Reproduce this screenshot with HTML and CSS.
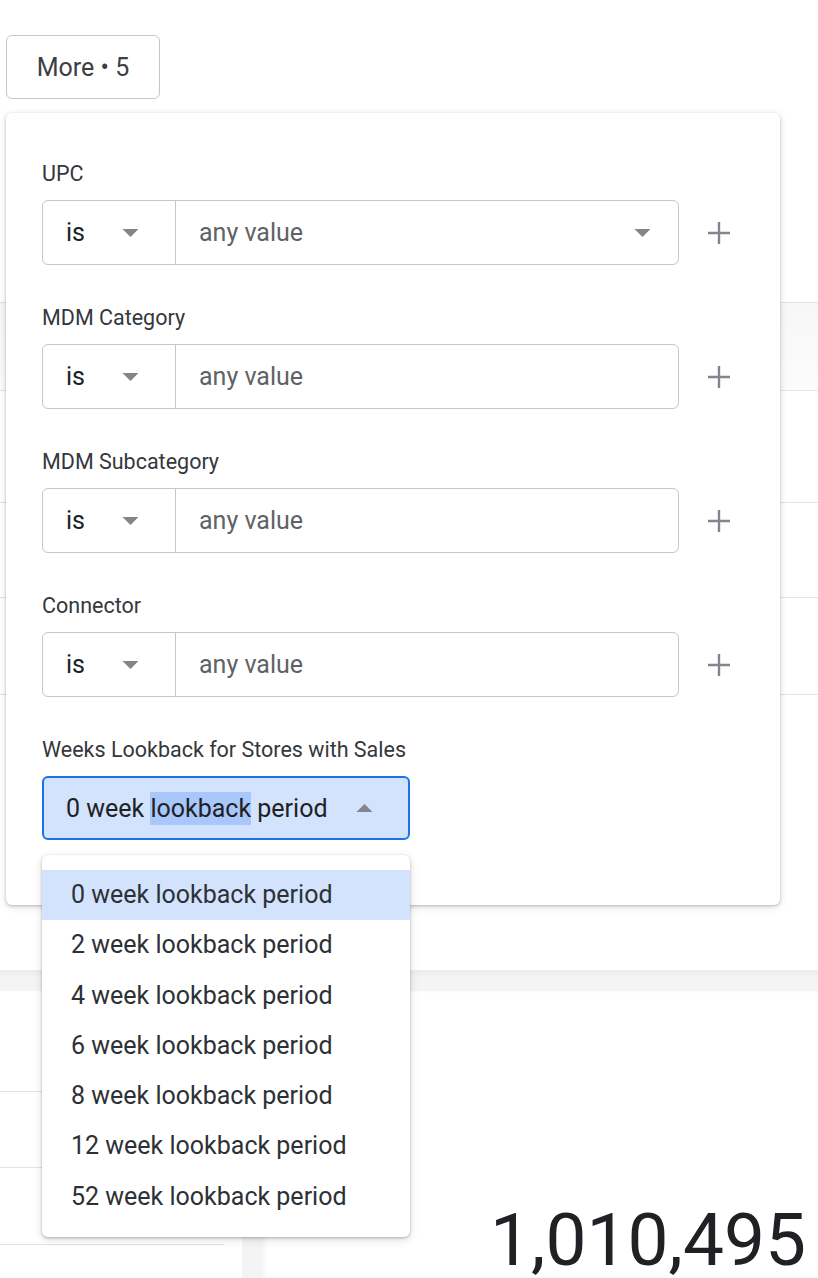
FILE: index.html
```html
<!DOCTYPE html>
<html>
<head>
<meta charset="utf-8">
<title>Filters</title>
<link rel="stylesheet" href="styles.css">
</head>
<body>
<div class="page">
  <div class="bg-top">
    <div class="more-wrap">
      <button class="more-btn">More • 5</button>
      <div class="popover">
        <div class="field">
          <div class="label">UPC</div>
          <div class="row">
            <div class="group">
              <div class="op">is<svg class="caret" viewBox="0 0 16 8"><path d="M0 0h16L8 8z"/></svg></div>
              <div class="val">any value<svg class="caret caret-end" viewBox="0 0 16 8"><path d="M0 0h16L8 8z"/></svg></div>
            </div>
            <svg class="plus" viewBox="0 0 22 22"><path d="M11 0v22M0 11h22"/></svg>
          </div>
        </div>
        <div class="field">
          <div class="label">MDM Category</div>
          <div class="row">
            <div class="group">
              <div class="op">is<svg class="caret" viewBox="0 0 16 8"><path d="M0 0h16L8 8z"/></svg></div>
              <div class="val">any value</div>
            </div>
            <svg class="plus" viewBox="0 0 22 22"><path d="M11 0v22M0 11h22"/></svg>
          </div>
        </div>
        <div class="field">
          <div class="label">MDM Subcategory</div>
          <div class="row">
            <div class="group">
              <div class="op">is<svg class="caret" viewBox="0 0 16 8"><path d="M0 0h16L8 8z"/></svg></div>
              <div class="val">any value</div>
            </div>
            <svg class="plus" viewBox="0 0 22 22"><path d="M11 0v22M0 11h22"/></svg>
          </div>
        </div>
        <div class="field">
          <div class="label">Connector</div>
          <div class="row">
            <div class="group">
              <div class="op">is<svg class="caret" viewBox="0 0 16 8"><path d="M0 0h16L8 8z"/></svg></div>
              <div class="val">any value</div>
            </div>
            <svg class="plus" viewBox="0 0 22 22"><path d="M11 0v22M0 11h22"/></svg>
          </div>
        </div>
        <div class="field field-last">
          <div class="label">Weeks Lookback for Stores with Sales</div>
          <div class="select-wrap">
            <div class="select"><span>0 week <span class="sel">lookback</span> period</span><svg class="caret caret-up" viewBox="0 0 16 8"><path d="M0 8h16L8 0z"/></svg></div>
            <ul class="menu">
              <li class="active">0 week lookback period</li>
              <li>2 week lookback period</li>
              <li>4 week lookback period</li>
              <li>6 week lookback period</li>
              <li>8 week lookback period</li>
              <li>12 week lookback period</li>
              <li>52 week lookback period</li>
            </ul>
          </div>
        </div>
      </div>
    </div>
  </div>
  <div class="bg-band"></div>
  <div class="bg-row r1"></div>
  <div class="bg-row r2"></div>
  <div class="bg-row r3"></div>
  <div class="bg-spacer"></div>
  <div class="bg-gutter-h"></div>
  <div class="tiles">
    <div class="tile-left">
      <div class="tl-line l1"></div>
      <div class="tl-line l2"></div>
      <div class="tl-line l3"></div>
    </div>
    <div class="tile-gutter"></div>
    <div class="tile-right">
      <div class="big-number">1,010,495</div>
    </div>
  </div>
</div>
</body>
</html>
```
FILE: styles.css
```css
html, body {
  margin: 0;
  padding: 0;
  background: #ffffff;
  height: 1278px;
  overflow: hidden;
}
body {
  font-family: Roboto, "Noto Sans", Arial, sans-serif;
  color: #3c4043;
}
.page {
  width: 818px;
  height: 1278px;
  display: flex;
  flex-direction: column;
}
.bg-top {
  height: 303px;
  flex: none;
  border-bottom: 1px solid #e2e3e5;
  box-sizing: border-box;
  padding-top: 35px;
  padding-left: 6px;
}
.more-wrap {
  position: relative;
  width: 154px;
}
.more-btn {
  display: block;
  width: 154px;
  height: 64px;
  border: 1px solid #c3c7cc;
  border-radius: 6px;
  background: #fff;
  font-family: Roboto, "Noto Sans", Arial, sans-serif;
  font-size: 25px;
  color: #3c4043;
  padding: 0;
  box-sizing: border-box;
}
.popover {
  position: absolute;
  left: 0;
  top: 78px;
  width: 774px;
  height: 792px;
  box-sizing: border-box;
  background: #fff;
  border-radius: 6px;
  box-shadow: 0 1px 3px rgba(0,0,0,0.22), 0 2px 8px rgba(0,0,0,0.12);
  padding: 49px 36px 0;
  z-index: 5;
}
.field {
  margin-bottom: 41px;
}
.label {
  font-size: 21.5px;
  line-height: 24px;
  height: 24px;
  color: #34383c;
  margin-bottom: 14px;
  white-space: nowrap;
}
.row {
  display: flex;
  align-items: center;
}
.group {
  width: 637px;
  height: 65px;
  box-sizing: border-box;
  border: 1px solid #c4c7cc;
  border-radius: 6px;
  display: flex;
  font-size: 25px;
}
.op {
  width: 133px;
  flex: none;
  border-right: 1px solid #c4c7cc;
  display: flex;
  align-items: center;
  padding-left: 23px;
  padding-right: 36px;
  box-sizing: border-box;
  color: #202124;
}
.op .caret {
  margin-left: auto;
}
.caret {
  width: 17px;
  height: 8px;
  fill: #80868b;
  flex: none;
}
.val {
  flex: 1;
  display: flex;
  align-items: center;
  padding-left: 23px;
  padding-right: 27px;
  color: #5f6368;
}
.caret-end {
  margin-left: auto;
}
.plus {
  width: 22px;
  height: 22px;
  margin-left: 29px;
  stroke: #80868b;
  stroke-width: 2.4;
  fill: none;
}
.field-last {
  margin-bottom: 0;
}
.select-wrap {
  position: relative;
  width: 368px;
}
.select {
  height: 64px;
  box-sizing: border-box;
  border: 2px solid #1a73e8;
  border-radius: 6px;
  background: #d3e3fd;
  display: flex;
  align-items: center;
  padding-left: 22px;
  padding-right: 35px;
  font-size: 25px;
  color: #202124;
  white-space: pre;
}
.sel {
  background: #a8c7fa;
  line-height: 33px;
  display: inline-block;
}
.caret-up {
  margin-left: auto;
}
.menu {
  position: absolute;
  left: 0;
  top: 79px;
  width: 368px;
  margin: 0;
  padding: 15px 0;
  list-style: none;
  background: #fff;
  border-radius: 6px;
  box-shadow: 0 1px 3px rgba(0,0,0,0.25), 0 3px 10px rgba(0,0,0,0.12);
  box-sizing: border-box;
}
.menu li {
  height: 50.3px;
  line-height: 50px;
  padding-left: 29px;
  font-size: 25px;
  color: #2d3136;
  white-space: nowrap;
}
.menu li.active {
  background: #d3e3fd;
}
.bg-band {
  height: 88px;
  flex: none;
  background: linear-gradient(#f7f7f7, #fcfcfc);
  border-bottom: 1px solid #e6e6e6;
  box-sizing: border-box;
}
.bg-row {
  flex: none;
  border-bottom: 1px solid #e4e4e4;
  box-sizing: border-box;
}
.r1 { height: 112px; }
.r2 { height: 95px; }
.r3 { height: 97px; }
.bg-spacer {
  height: 275px;
  flex: none;
}
.bg-gutter-h {
  height: 21px;
  flex: none;
  background: linear-gradient(#ececec, #f4f4f4 40%, #f4f4f4);
}
.tiles {
  flex: 1;
  display: flex;
}
.tile-left {
  width: 242px;
  flex: none;
  padding-top: 100px;
  box-sizing: border-box;
}
.tl-line {
  width: 224px;
  border-bottom: 1px solid #e3e3e3;
}
.l1 { height: 0; }
.l2 { height: 0; margin-top: 75px; }
.l3 { height: 0; margin-top: 76px; }
.tile-gutter {
  width: 20px;
  flex: none;
  background: #f4f4f4;
}
.tile-right {
  flex: 1;
  display: flex;
  flex-direction: column;
  justify-content: flex-end;
  align-items: flex-end;
  padding-right: 12px;
  box-shadow: inset 3px 0 4px rgba(0,0,0,0.04);
}
.big-number {
  font-size: 73px;
  line-height: 74px;
  color: #202124;
  margin-bottom: 1px;
}
```
